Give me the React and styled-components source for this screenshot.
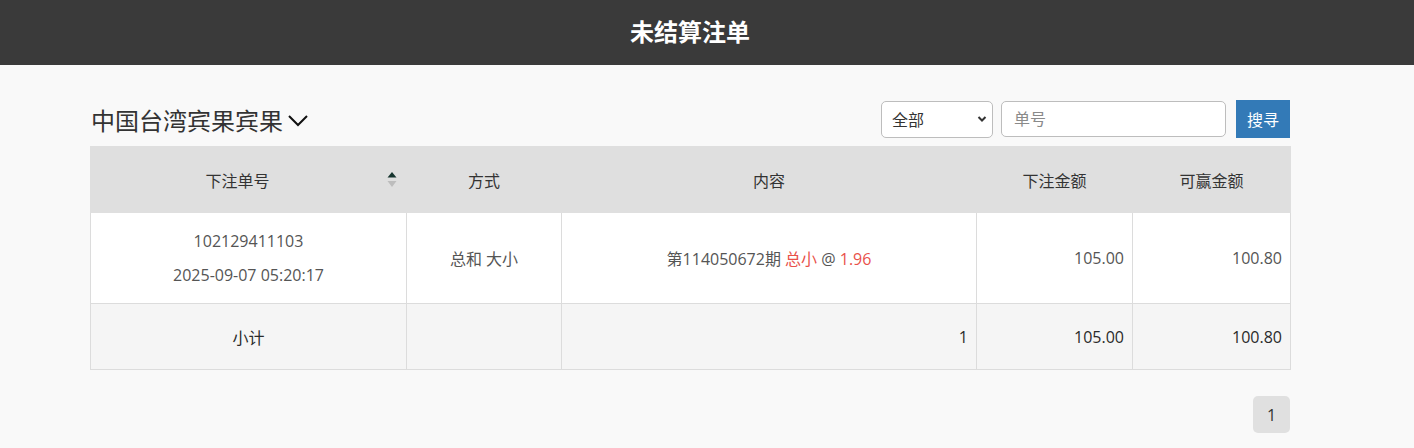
import React from "react";
import styled, { createGlobalStyle } from "styled-components";

const GlobalStyle = createGlobalStyle`
  html, body {
    margin: 0;
    padding: 0;
    background: #f9f9f9;
    font-family: "Open Sans", "Noto Sans CJK SC", sans-serif;
    color: #333;
  }
  * { box-sizing: border-box; }
`;

const rows = [
  {
    id: "102129411103",
    time: "2025-09-07 05:20:17",
    way: "总和 大小",
    issue: "114050672",
    pick: "总小",
    odds: "1.96",
    amount: "105.00",
    win: "100.80",
  },
];

function App() {
  return (
    <Page>
      <GlobalStyle />
      <TopBar>未结算注单</TopBar>

      <Main>
        <Toolbar>
          <GameName>
            中国台湾宾果宾果
            <svg width="22" height="14" viewBox="0 0 22 14">
              <path d="M2 2 L11 11 L20 2" fill="none" stroke="#111" strokeWidth="2" />
            </svg>
          </GameName>
          <Filters>
            <SelectBox>
              <span>全部</span>
              <svg width="10" height="8" viewBox="0 0 10 8">
                <path d="M1.5 2 L5 5.5 L8.5 2" fill="none" stroke="#333" strokeWidth="2" />
              </svg>
            </SelectBox>
            <SearchInput placeholder="单号" />
            <SearchButton>搜寻</SearchButton>
          </Filters>
        </Toolbar>

        <Table>
          <colgroup>
            <col style={{ width: 316 }} />
            <col style={{ width: 155 }} />
            <col style={{ width: 415 }} />
            <col style={{ width: 156 }} />
            <col style={{ width: 158 }} />
          </colgroup>
          <thead>
            <tr>
              <Th $sort>
                下注单号
                <SortIcon>
                  <svg width="10" height="17" viewBox="0 0 10 17">
                    <path d="M5 1 L9.5 6.5 L0.5 6.5 Z" fill="#16352e" />
                    <path d="M5 16 L9.5 10 L0.5 10 Z" fill="#bdbdbd" />
                  </svg>
                </SortIcon>
              </Th>
              <Th>方式</Th>
              <Th>内容</Th>
              <Th>下注金额</Th>
              <Th>可赢金额</Th>
            </tr>
          </thead>
          <tbody>
            {rows.map((r) => (
              <BodyRow key={r.id}>
                <Td>
                  <Line>{r.id}</Line>
                  <Line>{r.time}</Line>
                </Td>
                <Td>{r.way}</Td>
                <Td>
                  第{r.issue}期 <Red>{r.pick}</Red> @ <Red>{r.odds}</Red>
                </Td>
                <Td $right>{r.amount}</Td>
                <Td $right>{r.win}</Td>
              </BodyRow>
            ))}
            <TotalRow>
              <Td>小计</Td>
              <Td></Td>
              <Td $right>1</Td>
              <Td $right>105.00</Td>
              <Td $right>100.80</Td>
            </TotalRow>
          </tbody>
        </Table>

        <Pager>
          <PageButton>1</PageButton>
        </Pager>
      </Main>
    </Page>
  );
}

const Page = styled.div`
  min-height: 448px;
`;

const TopBar = styled.header`
  height: 65px;
  background: #3a3a3a;
  color: #fff;
  font-size: 24px;
  font-weight: 700;
  display: flex;
  align-items: center;
  justify-content: center;
  padding-right: 34px;
  padding-bottom: 4px;
`;

const Main = styled.div`
  width: 1200px;
  margin-left: 90px;
  padding-top: 35px;
`;

const Toolbar = styled.div`
  display: flex;
  align-items: center;
  justify-content: space-between;
  height: 38px;
  margin-bottom: 8px;
`;

const GameName = styled.div`
  display: flex;
  align-items: center;
  gap: 4px;
  font-size: 24px;
  color: #333;
  padding-left: 1px;

  svg {
    margin-top: 3px;
  }
`;

const Filters = styled.div`
  display: flex;
  align-items: center;
`;

const SelectBox = styled.div`
  width: 112px;
  height: 37px;
  border: 1px solid #bdbdbd;
  border-radius: 5px;
  background: #fff;
  display: flex;
  align-items: center;
  justify-content: space-between;
  padding: 0 5px 0 10px;
  font-size: 16px;
  color: #333;
`;

const SearchInput = styled.input`
  width: 225px;
  height: 36px;
  margin-left: 8px;
  border: 1px solid #bdbdbd;
  border-radius: 5px;
  background: #fff;
  padding: 0 12px;
  font-family: "Open Sans", "Noto Sans CJK SC", sans-serif;
  font-size: 16px;
  outline: none;

  &::placeholder {
    color: #8a8a8a;
  }
`;

const SearchButton = styled.button`
  width: 54px;
  height: 38px;
  margin-left: 10px;
  border: none;
  border-radius: 0;
  background: #337ab7;
  color: #fff;
  font-family: "Open Sans", "Noto Sans CJK SC", sans-serif;
  font-size: 16px;
  padding: 0;
`;

const Table = styled.table`
  width: 1200px;
  table-layout: fixed;
  border-collapse: collapse;
  font-size: 16px;
  color: #333;
`;

const Th = styled.th`
  position: relative;
  height: 66px;
  background: #dfdfdf;
  font-weight: 400;
  color: #333;
  text-align: center;
  padding: 0 ${(p) => (p.$sort ? "30px" : "8px")} 0 8px;
  border: 1px solid #dfdfdf;
`;

const SortIcon = styled.span`
  position: absolute;
  right: 9px;
  top: 24px;
  line-height: 0;
`;

const BodyRow = styled.tr`
  height: 91px;
  background: #fff;
  color: #555;
`;

const TotalRow = styled.tr`
  height: 66px;
  background: #f5f5f5;
  color: #2a2a2a;
`;

const Td = styled.td`
  border: 1px solid #dcdcdc;
  text-align: ${(p) => (p.$right ? "right" : "center")};
  padding: 0 8px;
  vertical-align: middle;
`;

const Line = styled.div`
  line-height: 34px;
`;

const Red = styled.span`
  color: #e9514a;
`;

const Pager = styled.div`
  display: flex;
  justify-content: flex-end;
  padding-top: 26px;
`;

const PageButton = styled.div`
  width: 37px;
  height: 37px;
  border-radius: 5px;
  background: #e0e0e0;
  display: flex;
  align-items: center;
  justify-content: center;
  font-size: 16px;
  color: #333;
`;

export default App;
